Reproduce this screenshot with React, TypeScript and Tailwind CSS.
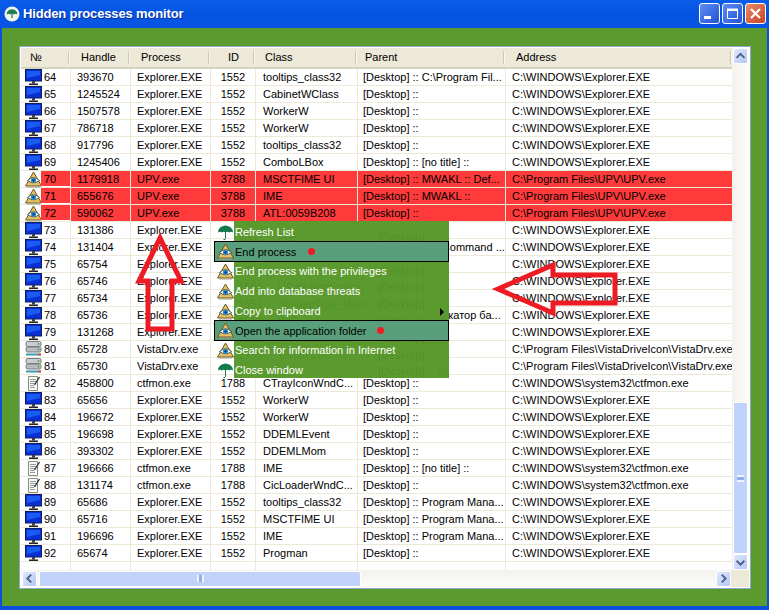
const columns = "grid grid-cols-[50px_60px_80px_45px_102px_148px_227px]";
const font = "font-['Liberation_Sans',sans-serif] text-[11px]";

const EXP = "C:\\WINDOWS\\Explorer.EXE";
const UPV = "C:\\Program Files\\UPV\\UPV.exe";
const VST = "C:\\Program Files\\VistaDriveIcon\\VistaDrv.exe";
const CTF = "C:\\WINDOWS\\system32\\ctfmon.exe";
const D = "[Desktop] ::";
const PM = "[Desktop] :: Program Mana...";

type Kind = "pc" | "eye" | "drive" | "note";
type Row = [Kind, number, string, string, string, string, string, string];

const rows: Row[] = [
  ["pc", 64, "393670", "Explorer.EXE", "1552", "tooltips_class32", "[Desktop] :: C:\\Program Fil...", EXP],
  ["pc", 65, "1245524", "Explorer.EXE", "1552", "CabinetWClass", D, EXP],
  ["pc", 66, "1507578", "Explorer.EXE", "1552", "WorkerW", D, EXP],
  ["pc", 67, "786718", "Explorer.EXE", "1552", "WorkerW", D, EXP],
  ["pc", 68, "917796", "Explorer.EXE", "1552", "tooltips_class32", D, EXP],
  ["pc", 69, "1245406", "Explorer.EXE", "1552", "ComboLBox", "[Desktop] :: [no title] ::", EXP],
  ["eye", 70, "1179918", "UPV.exe", "3788", "MSCTFIME UI", "[Desktop] :: MWAKL :: Def...", UPV],
  ["eye", 71, "655676", "UPV.exe", "3788", "IME", "[Desktop] :: MWAKL ::", UPV],
  ["eye", 72, "590062", "UPV.exe", "3788", "ATL:0059B208", D, UPV],
  ["pc", 73, "131386", "Explorer.EXE", "", "", "", EXP],
  ["pc", 74, "131404", "Explorer.EXE", "", "", "[Desktop] :: MC Command ...", EXP],
  ["pc", 75, "65754", "Explorer.EXE", "", "", "", EXP],
  ["pc", 76, "65746", "Explorer.EXE", "", "", "", EXP],
  ["pc", 77, "65734", "Explorer.EXE", "", "", "", EXP],
  ["pc", 78, "65736", "Explorer.EXE", "", "", "[Desktop] :: Индикатор ба...", EXP],
  ["pc", 79, "131268", "Explorer.EXE", "", "", "", EXP],
  ["drive", 80, "65728", "VistaDrv.exe", "", "", "", VST],
  ["drive", 81, "65730", "VistaDrv.exe", "", "", "", VST],
  ["note", 82, "458800", "ctfmon.exe", "1788", "CTrayIconWndC...", D, CTF],
  ["pc", 83, "65656", "Explorer.EXE", "1552", "WorkerW", D, EXP],
  ["pc", 84, "196672", "Explorer.EXE", "1552", "WorkerW", D, EXP],
  ["pc", 85, "196698", "Explorer.EXE", "1552", "DDEMLEvent", D, EXP],
  ["pc", 86, "393302", "Explorer.EXE", "1552", "DDEMLMom", D, EXP],
  ["note", 87, "196666", "ctfmon.exe", "1788", "IME", "[Desktop] :: [no title] ::", CTF],
  ["note", 88, "131174", "ctfmon.exe", "1788", "CicLoaderWndC...", D, CTF],
  ["pc", 89, "65686", "Explorer.EXE", "1552", "tooltips_class32", PM, EXP],
  ["pc", 90, "65716", "Explorer.EXE", "1552", "MSCTFIME UI", PM, EXP],
  ["pc", 91, "196696", "Explorer.EXE", "1552", "IME", PM, EXP],
  ["pc", 92, "65674", "Explorer.EXE", "1552", "Progman", D, EXP],
];

// faint rows that show through the translucent menu
const ghosts = [
  ["1552", "IME", "[Desktop] ::"],
  ["", "", "[Desktop] :: MC"],
  ["1552", "", "[Desktop] ::"],
  ["1552", "UPnP Notification", "[Desktop] ::"],
  ["1552", "SystemTray_Main", "[Desktop] ::"],
  ["1552", "IME", "[Desktop] :: Ин"],
  ["1552", "MSWebcheck...", "[Desktop] ::"],
  ["1736", "VistaIcon", "[Desktop] ::"],
  ["", "", "[Desktop] :: Vis"],
];

function Monitor() {
  return (
    <svg width="17" height="17" viewBox="0 0 17 17" className="shrink-0">
      <rect x="0.5" y="0.5" width="16" height="11.5" fill="#0a2fd6" stroke="#0c1f5c" />
      <path d="M2 2h13v4L2 9z" fill="#1a5cf2" />
      <rect x="7" y="12" width="3" height="2.5" fill="#3a3f4a" />
      <rect x="4" y="14.5" width="9" height="1.5" fill="#22252b" />
    </svg>
  );
}

function Eye() {
  return (
    <svg width="17" height="17" viewBox="0 0 17 17" className="shrink-0">
      <path d="M8.5 1L16.5 15H.5z" fill="#e3c065" stroke="#6b5a2a" />
      <path d="M2 15.5h13v1H2z" fill="#a89f8a" />
      <path d="M2.5 9.5Q8.5 4 14.5 9.5Q8.5 14 2.5 9.5z" fill="#fff" stroke="#3a3420" strokeWidth="0.8" />
      <circle cx="8.5" cy="9.3" r="2.6" fill="#1f8fd8" />
      <circle cx="8.5" cy="9.3" r="1.1" fill="#0b2a55" />
    </svg>
  );
}

function Umbrella() {
  return (
    <svg width="17" height="17" viewBox="0 0 17 17" className="shrink-0">
      <path d="M1 8.5Q1.5 2 8.5 1.5Q15.5 2 16 8.5Q14 6.8 12.3 8.5Q10.5 6.8 8.5 8.5Q6.5 6.8 4.8 8.5Q3 6.8 1 8.5z" fill="#0f7a4a" />
      <path d="M8.5 8v6.5q0 1.5-2 1" fill="none" stroke="#2c6a4a" strokeWidth="1" />
    </svg>
  );
}

function Drive() {
  return (
    <svg width="17" height="17" viewBox="0 0 17 17" className="shrink-0">
      <rect x="1" y="0.5" width="15" height="5" rx="1.5" fill="#c9ccd0" stroke="#777c84" />
      <rect x="1" y="6" width="15" height="5" rx="1.5" fill="#b9bdc2" stroke="#777c84" />
      <circle cx="13.5" cy="3" r="1" fill="#5aa53c" />
      <circle cx="13.5" cy="8.5" r="1" fill="#5aa53c" />
      <rect x="1" y="12.5" width="15" height="2" fill="#3f9aa8" />
      <rect x="13" y="12.5" width="3" height="2" fill="#d8504a" />
    </svg>
  );
}

function Note() {
  return (
    <svg width="17" height="17" viewBox="0 0 17 17" className="shrink-0">
      <path d="M3.5 1.5h9v14h-9z" fill="#fbfbf6" stroke="#8b8b86" />
      <path d="M5 4.5h6M5 6.5h6M5 8.5h5M5 10.5h4M5 12.5h5" stroke="#7d8088" strokeWidth="0.8" />
      <path d="M14.5 2L9.5 10" stroke="#33363b" strokeWidth="1.4" />
    </svg>
  );
}

function RowIcon({ kind }: { kind: Kind }) {
  if (kind === "pc") return <Monitor />;
  if (kind === "eye") return <Eye />;
  if (kind === "drive") return <Drive />;
  return <Note />;
}

function ListRow({ row }: { row: Row }) {
  const [kind, no, handle, process, id, cls, parent, address] = row;
  const hot = kind === "eye";
  const cell = "h-[17px] leading-[16px] border-b border-r border-[#ece9d8] whitespace-nowrap overflow-hidden " + (hot ? "bg-[#fe3a3a]" : "");
  return (
    <div className={columns}>
      <div className="h-[17px] flex items-center border-b border-r border-[#ece9d8] pl-1 relative">
        <RowIcon kind={kind} />
        <span className={"absolute left-[20px] top-0 bottom-[1px] right-0 pl-[3px] leading-[16px] " + (hot ? "bg-[#fe3a3a]" : "")}>{no}</span>
      </div>
      <div className={cell + " pl-[6px]"}>{handle}</div>
      <div className={cell + " pl-[6px]"}>{process}</div>
      <div className={cell + " text-center"}>{id}</div>
      <div className={cell + " pl-[7px]"}>{cls}</div>
      <div className={cell + " pl-[5px]"}>{parent}</div>
      <div className={cell + " pl-[6px]"}>{address}</div>
    </div>
  );
}

function HeaderCell({ label, className }: { label: string; className: string }) {
  return (
    <div className={"h-full flex items-center relative " + className}>
      {label}
      <span className="absolute right-[1px] top-[3px] bottom-[3px] w-[2px] border-l border-[#cdcab9] bg-white/60" />
    </div>
  );
}

function ScrollArrow({ dir }: { dir: "up" | "down" | "left" | "right" }) {
  const d = {
    up: "M3 9l4.5-4.5L12 9",
    down: "M3 5.5L7.5 10 12 5.5",
    left: "M9.5 3L5 7.5 9.5 12",
    right: "M5.5 3L10 7.5 5.5 12",
  }[dir];
  return (
    <div className="w-[15px] h-[16px] shrink-0 rounded-[2px] border border-white bg-gradient-to-br from-[#dfe8fd] to-[#b4c8f6] flex items-center justify-center">
      <svg width="15" height="15" viewBox="0 0 15 15">
        <path d={d} fill="none" stroke="#4d6185" strokeWidth="2.2" />
      </svg>
    </div>
  );
}

function MenuItem({ icon, label, selected, dotAt, submenu }: { icon: "eye" | "umbrella"; label: string; selected?: boolean; dotAt?: string; submenu?: boolean }) {
  return (
    <div className={"flex items-center relative border " + (selected ? "border-black bg-[#5a9f7c] text-black -my-[1px] h-[21px] z-10" : "h-[20px] border-transparent text-white")}>
      <div className="w-[20px] flex justify-center shrink-0">{icon === "eye" ? <Eye /> : <Umbrella />}</div>
      <span className="whitespace-nowrap">{label}</span>
      {dotAt && <span className={"absolute top-[6px] w-[7px] h-[7px] rounded-full bg-[#ed1c24] " + dotAt} />}
      {submenu && <span className="absolute right-[4px] top-[6px] w-0 h-0 border-y-[4px] border-y-transparent border-l-[4px] border-l-black" />}
    </div>
  );
}

function ContextMenu() {
  return (
    <div className="absolute left-[194px] top-[174px] w-[235px] h-[157px] z-10 leading-[16px]">
      <div className="absolute left-[20px] right-0 top-0 bottom-0 bg-[#5b9a2e] overflow-hidden">
        <div className="pt-[8px] text-black/[0.09] whitespace-nowrap">
          {ghosts.map((g, i) => (
            <div key={i} className="h-[16.8px] flex">
              <span className="w-[44px] shrink-0 pl-[4px]">{g[0]}</span>
              <span className="w-[100px] shrink-0">{g[1]}</span>
              <span>{g[2]}</span>
            </div>
          ))}
        </div>
      </div>
      <div className="relative flex flex-col pt-[1px]">
        <MenuItem icon="umbrella" label="Refresh List" />
        <MenuItem icon="eye" label="End process" selected dotAt="left-[93px]" />
        <MenuItem icon="eye" label="End process with the privileges" />
        <MenuItem icon="eye" label="Add into database threats" />
        <MenuItem icon="eye" label="Copy to clipboard" submenu />
        <MenuItem icon="eye" label="Open the application folder" selected dotAt="left-[162px]" />
        <MenuItem icon="eye" label="Search for information in Internet" />
        <MenuItem icon="umbrella" label="Close window" />
      </div>
    </div>
  );
}

function WindowButton({ children, className }: { children: React.ReactNode; className: string }) {
  return (
    <div className={"w-[21px] h-[21px] rounded-[3px] border border-white flex items-center justify-center " + className}>
      <svg width="17" height="17" viewBox="0 0 17 17">{children}</svg>
    </div>
  );
}

export default function App() {
  return (
    <div className={"w-[769px] h-[610px] overflow-hidden flex flex-col bg-[#0a4fe0] text-black " + font}>
      <div className="h-[28px] shrink-0 flex items-center bg-gradient-to-b from-[#0a5de8] via-[#0553e3] to-[#0a56e4] pl-[4px] pr-[3px]">
        <svg width="16" height="16" viewBox="0 0 16 16" className="shrink-0">
          <circle cx="8" cy="8" r="7.5" fill="#f2f6ee" />
          <path d="M2.5 8.5Q3 3.5 8 3.2Q13 3.5 13.5 8.5Q11.5 7.2 10 8.5Q8 7.2 6 8.5Q4.5 7.2 2.5 8.5z" fill="#1f7a4d" />
          <path d="M8 8v4" stroke="#1f7a4d" strokeWidth="1.2" />
        </svg>
        <span className="ml-[3px] text-white font-bold text-[13px] tracking-[-0.15px] [text-shadow:1px_1px_0_#0b2f9a]">Hidden processes monitor</span>
        <div className="ml-auto flex gap-[2px] -mt-[2px]">
          <WindowButton className="bg-gradient-to-br from-[#5f8df2] to-[#2450d8]"><rect x="3" y="11" width="7" height="3" fill="#fff" /></WindowButton>
          <WindowButton className="bg-gradient-to-br from-[#5f8df2] to-[#2450d8]"><path d="M3.5 4.5h10v9h-10z" fill="none" stroke="#fff" /><path d="M3 3.5h11v2.5H3z" fill="#fff" /></WindowButton>
          <WindowButton className="bg-gradient-to-br from-[#e88a6c] to-[#c8401c]"><path d="M4 4l9 9M13 4l-9 9" stroke="#fff" strokeWidth="2.2" /></WindowButton>
        </div>
      </div>

      <div className="flex-1 mx-[2px] mb-[4px] bg-[#5b9a2e] pt-[18px] pl-[17px] pr-[16px] pb-[17px] min-h-0">
        <div className="relative h-full border border-[#8fa8c8] bg-white p-[1px] flex flex-col">
          <div className="flex flex-1 min-h-0">
            <div className="w-[712px] overflow-hidden flex flex-col">
              <div className={columns + " h-[21px] shrink-0 bg-[#ece9d8] border-b-2 border-[#d6d2c2]"}>
                <HeaderCell label="№" className="pl-[9px]" />
                <HeaderCell label="Handle" className="pl-[10px]" />
                <HeaderCell label="Process" className="pl-[10px]" />
                <HeaderCell label="ID" className="justify-center" />
                <HeaderCell label="Class" className="pl-[9px]" />
                <HeaderCell label="Parent" className="pl-[7px]" />
                <HeaderCell label="Address" className="pl-[10px]" />
              </div>
              {rows.map((r) => (
                <ListRow key={r[1]} row={r} />
              ))}
              <div className={columns + " h-[11px]"}>
                {[0, 1, 2, 3, 4, 5, 6].map((i) => (
                  <div key={i} className="border-r border-[#ece9d8]" />
                ))}
              </div>
            </div>
            <div className="w-[17px] shrink-0 flex flex-col items-center bg-gradient-to-r from-[#f3f2ec] to-[#fdfdfb]">
              <ScrollArrow dir="up" />
              <div className="flex-1" />
              <div className="w-[15px] h-[152px] rounded-[2px] border border-white bg-[#c1d3fb] flex items-center justify-center">
                <div className="w-[7px] h-[7px] border-y-2 border-[#eef3ff] bg-[#94aee8]" />
              </div>
              <ScrollArrow dir="down" />
            </div>
          </div>
          <div className="h-[17px] shrink-0 flex items-center bg-gradient-to-b from-[#f3f2ec] to-[#fdfdfb]">
            <div className="pl-[1px]"><ScrollArrow dir="left" /></div>
            <div className="ml-[2px] w-[322px] h-[16px] rounded-[2px] border border-white bg-[#c1d3fb] flex items-center justify-center">
              <div className="w-[7px] h-[7px] border-x-2 border-[#eef3ff] bg-[#94aee8]" />
            </div>
            <div className="ml-[355px]"><ScrollArrow dir="right" /></div>
            <div className="flex-1 self-stretch bg-[#ece9d8]" />
          </div>

          <ContextMenu />

          <svg className="absolute left-0 top-0 z-20 pointer-events-none" width="730" height="540" viewBox="0 0 730 540">
            <path d="M140 191L119 234L128 234L128 282L152 282L152 234L161 234z" fill="none" stroke="#ed1c24" strokeWidth="5" />
            <path d="M478 242L533 218L533 228L595 228L595 256L533 256L533 266z" fill="none" stroke="#ed1c24" strokeWidth="5" />
          </svg>
        </div>
      </div>
    </div>
  );
}
